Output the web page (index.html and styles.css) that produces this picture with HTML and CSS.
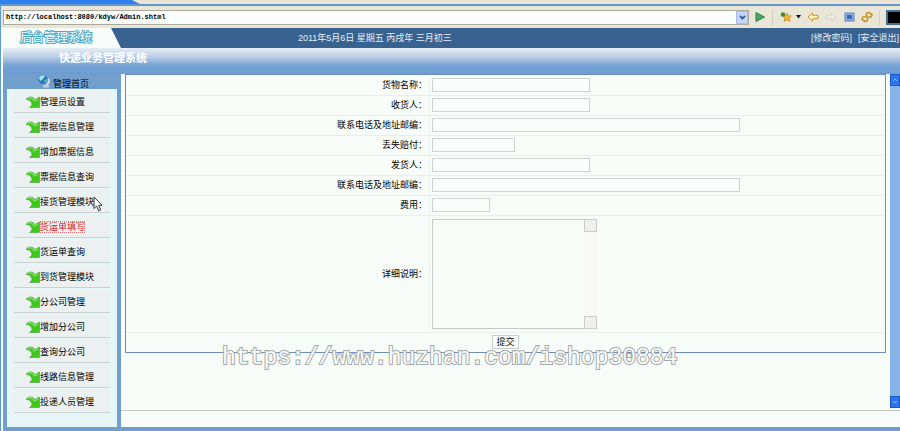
FILE: index.html
```
<!DOCTYPE html>
<html>
<head>
    <meta charset="UTF-8">
    <title>后台管理系统</title>
    <link rel="stylesheet" href="styles.css">
</head>
<body>
    <div class="tab-strip"><div class="active-tab"></div></div>
    <div class="toolbar">
        <div class="address">
            <input type="text" class="address-input" aria-label="Address" value="http://localhost:8080/kdyw/Admin.shtml">
            <button type="button" class="address-drop" aria-label="History">
                <svg width="7" height="5" viewBox="0 0 7 5"><path d="M1 1l2.5 2.5L6 1" fill="none" stroke="#35598f" stroke-width="1.8"/></svg>
            </button>
        </div>
        <button type="button" class="tool" aria-label="Go">
            <svg width="12" height="12" viewBox="0 0 12 12"><path d="M2 1.5L10.5 6 2 10.5z" fill="#4da866" stroke="#317c4b"/></svg>
        </button>
        <span class="tool-sep"></span>
        <button type="button" class="tool fav" aria-label="Favorites">
            <svg width="14" height="12" viewBox="0 0 14 12"><path d="M8 2l1.3 2.7 3 .2-2.2 2.1.8 3.3L8 8.700l-2.800 1.600.7-3.200L3.600 5l3.100-.3z" fill="#f5b62e" stroke="#d38a16" stroke-width=".8"/><circle cx="4" cy="3.5" r="2.3" fill="#3c8c3b"/></svg>
            <svg width="5" height="4" viewBox="0 0 5 4"><path d="M0 0h5L2.5 3.5z" fill="#111"/></svg>
        </button>
        <button type="button" class="tool" aria-label="Back">
            <svg width="12" height="12" viewBox="0 0 12 12"><path d="M1 6l4.500-4v2.300H11v3.400H5.500V10z" fill="#fff4c4" stroke="#c8952f"/></svg>
        </button>
        <button type="button" class="tool" aria-label="Forward">
            <svg width="12" height="12" viewBox="0 0 12 12"><path d="M11 6L6.500 2v2.300H1v3.400h5.500V10z" fill="#eeece0" stroke="#d5d3c7"/></svg>
        </button>
        <button type="button" class="tool" aria-label="Stop">
            <svg width="12" height="12" viewBox="0 0 12 12"><rect x="2" y="2" width="9" height="8" fill="#8fb0e2" stroke="#5f83bf"/><rect x="4" y="4" width="5" height="4" fill="#4168b4"/></svg>
        </button>
        <button type="button" class="tool" aria-label="Refresh">
            <svg width="12" height="12" viewBox="0 0 12 12"><path d="M5.500 6.500V2.500L8 1.500l3 2-1 2.500H7.500M6.500 5.500v4L4 10.500l-3-2L2 6h2.500" fill="none" stroke="#c8922e" stroke-width="1.600"/><path d="M7 3l2 .5M3 8l2 .5" fill="none" stroke="#ffe28a"/></svg>
        </button>
        <span class="tool-sep"></span>
        <span class="throbber"></span>
    </div>

    <div class="page">
        <header>
            <div class="top-bar">
                <div class="logo">后台管理系统</div>
                <div class="date">2011年5月6日 星期五 丙戌年 三月初三</div>
                <nav class="top-links">
                    <a href="#">[修改密码]</a>
                    <a href="#">[安全退出]</a>
                </nav>
            </div>
            <div class="banner">快递业务管理系统</div>
        </header>

        <div class="content">
            <aside class="sidebar">
                <a href="#" class="home">
                    <svg width="14" height="14" viewBox="0 0 14 14"><path d="M9 12c4-1.500 4.500-5 3-8l-1.500.8c1 2 .5 4.500-2 5.700z" fill="#dcdff5"/><ellipse cx="9" cy="12.300" rx="3.500" ry="1.300" fill="#c9cbe9"/><circle cx="6" cy="5.500" r="4.500" fill="#2b78c0"/><path d="M2 4c1-2.500 4-3.500 6-2.300C8.500 3 6.500 3 6 4.500S4 7 3 6.500z" fill="#a8e6ef"/><path d="M7 6l2.500-1 .5 2-2 2z" fill="#57bfa6"/></svg>
                    <span>管理首页</span>
                </a>
                <ul class="menu" id="menu"></ul>
            </aside>

            <main class="main">
                <div class="workspace">
                    <form class="form-wrap" onsubmit="return false">
                        <table class="form-table">
                            <tr>
                                <th><label for="goods">货物名称：</label></th>
                                <td><input type="text" id="goods" class="w-medium"></td>
                            </tr>
                            <tr>
                                <th><label for="receiver">收货人：</label></th>
                                <td><input type="text" id="receiver" class="w-medium"></td>
                            </tr>
                            <tr>
                                <th><label for="receiver-contact">联系电话及地址邮编：</label></th>
                                <td><input type="text" id="receiver-contact" class="w-long"></td>
                            </tr>
                            <tr>
                                <th><label for="compensation">丢失赔付：</label></th>
                                <td><input type="text" id="compensation" class="w-short"></td>
                            </tr>
                            <tr>
                                <th><label for="sender">发货人：</label></th>
                                <td><input type="text" id="sender" class="w-medium"></td>
                            </tr>
                            <tr>
                                <th><label for="sender-contact">联系电话及地址邮编：</label></th>
                                <td><input type="text" id="sender-contact" class="w-long"></td>
                            </tr>
                            <tr>
                                <th><label for="fee">费用：</label></th>
                                <td><input type="text" id="fee" class="w-tiny"></td>
                            </tr>
                            <tr class="detail-row">
                                <th><label for="detail">详细说明：</label></th>
                                <td>
                                    <div class="detail-box">
                                        <textarea id="detail"></textarea>
                                        <div class="detail-scroll"><span></span><span></span></div>
                                    </div>
                                </td>
                            </tr>
                            <tr>
                                <td colspan="2" class="submit-cell"><button type="submit" class="submit">提交</button></td>
                            </tr>
                        </table>
                    </form>
                    <div class="scrollbar">
                        <span><svg width="6" height="4" viewBox="0 0 6 4"><path d="M1 3l2-2 2 2" fill="none" stroke="#8fc0ff"/></svg></span>
                        <span><svg width="6" height="4" viewBox="0 0 6 4"><path d="M1 1l2 2 2-2" fill="none" stroke="#8fc0ff"/></svg></span>
                    </div>
                </div>
                <div class="status"></div>
            </main>
        </div>
    </div>

    <div class="watermark">https://www.huzhan.com/ishop30884</div>
    <svg class="pointer" width="10" height="16" viewBox="0 0 10 16"><path d="M1 1v11.500l2.700-2.500 2 4.800 2-.9-2-4.600H9z" fill="#fff" stroke="#333"/></svg>

<script>
    var items = ['管理员设置', '票据信息管理', '增加票据信息', '票据信息查询', '接货管理模块', '货运单填写', '货运单查询',
        '到货管理模块', '分公司管理', '增加分公司', '查询分公司', '线路信息管理', '投递人员管理'];
    var current = '货运单填写';
    var icon = '<svg width="14" height="12" viewBox="0 0 14 12"><path d="M0 3.500C2 .3 6.500 0 9 3.500L13.500 1v10.500H3.500L6 9C6 6 4 3.500 0 3.500z" fill="#3fc91d" stroke="#4a9a3c" stroke-width=".6"/><path d="M2 2.500c2-1.500 5-.5 6 2.500l4-2" fill="none" stroke="#a0ec85"/></svg>';

    document.getElementById('menu').innerHTML = items.map(function (name) {
        return '<li><a href="#"' + (name === current ? ' class="active"' : '') + '>' + icon + '<span>' + name + '</span></a></li>';
    }).join('');
</script>
</body>
</html>
```

FILE: styles.css
```
* {
    box-sizing: border-box;
}

body {
    display: flex;
    flex-direction: column;
    min-height: 100vh;
    margin: 0;
    font-family: "Liberation Sans", "Noto Sans CJK SC", sans-serif;
    font-size: 9px;
    line-height: 12px;
    color: #000;
    background-color: #f8fcf9;
}

a {
    color: inherit;
    text-decoration: none;
}

button {
    font: inherit;
    padding: 0;
    cursor: pointer;
}

svg {
    display: block;
    flex: none;
}

/* browser bars */
.tab-strip {
    height: 6px;
    background-color: #ece4d5;
    border-bottom: 2px solid #5f98cc;
}

.active-tab {
    width: 140px;
    height: 4px;
    background-color: #2f82ee;
    clip-path: polygon(0 0, 132px 0, 100% 100%, 0 100%);
}

.toolbar {
    display: flex;
    align-items: center;
    gap: 6px;
    height: 22px;
    padding-left: 2px;
    border-left: 1px solid #5f98cc;
    background-color: #e9e6d8;
    overflow: hidden;
}

.address {
    display: flex;
    flex: 1;
    height: 15px;
    margin-right: -1px;
    border: 1px solid #aaa99d;
    background-color: #fafdfb;
}

.address-input {
    flex: 1;
    min-width: 0;
    padding: 0 2px;
    border: none;
    outline: none;
    background: none;
    color: #000;
    font-family: "Liberation Mono", monospace;
    font-size: 7px;
    font-weight: bold;
}

.address-drop {
    display: flex;
    align-items: center;
    justify-content: center;
    width: 12px;
    border: 1px solid #a7bfe8;
    background-color: #c3d5f8;
}

.tool {
    display: flex;
    align-items: center;
    border: none;
    background: none;
}

.fav {
    gap: 3px;
}

.tool-sep {
    width: 1px;
    height: 15px;
    background-color: #d2cfc0;
}

.throbber {
    width: 14px;
    height: 15px;
    border: 2px solid #3d7188;
    border-right: none;
    background-color: #000;
}

/* page header */
.page {
    display: flex;
    flex: 1;
    flex-direction: column;
    border-left: 1px solid #5f98cc;
    padding-left: 2px;
}

.top-bar {
    display: flex;
    align-items: center;
    height: 20px;
    padding-right: 1px;
    background-color: #38628f;
    color: #e6f0fa;
}

.logo {
    width: 118px;
    padding-left: 17px;
    line-height: 20px;
    font-size: 12px;
    color: #f8fdfd;
    -webkit-text-stroke: 2px #4eabc8;
    paint-order: stroke fill;
    background-color: #f8fcf9;
    clip-path: polygon(0 0, 108px 0, 100% 100%, 0 100%);
}

.date {
    flex: 1;
    padding-left: 177px;
    white-space: nowrap;
}

.top-links {
    display: flex;
    gap: 6px;
    white-space: nowrap;
}

.banner {
    height: 26px;
    padding-left: 56px;
    font-size: 11px;
    font-weight: bold;
    line-height: 20px;
    color: #fff;
    background: linear-gradient(#e6edf5, #b9cde5 35%, #78a4d6 65%, #6b9cd2);
}

/* sidebar */
.content {
    display: flex;
    flex: 1;
    border-bottom: 4px solid #709fce;
}

.sidebar {
    display: flex;
    flex-direction: column;
    width: 118px;
    border: solid #709fce;
    border-width: 0 4px;
    background-color: #e6f6f7;
}

.home {
    display: flex;
    gap: 2px;
    height: 15px;
    padding-left: 30px;
    background-color: #709fce;
}

.home span {
    padding-top: 4px;
}

.menu {
    margin: 0;
    padding: 1px 7px 0;
    list-style: none;
}

.menu li {
    height: 23px;
    margin-bottom: 2px;
    border-bottom: 1px solid #cbd1d1;
    background-color: #ebf1f1;
}

.menu a {
    display: flex;
    align-items: center;
    height: 23px;
    padding-left: 12px;
    white-space: nowrap;
}

.menu a.active {
    color: #e0141c;
}

.menu a.active span {
    outline: 1px dotted #d77;
    outline-offset: -1px;
}

/* form */
.main {
    display: flex;
    flex: 1;
    flex-direction: column;
    min-width: 0;
}

.workspace {
    display: flex;
    flex: 1;
    align-items: flex-start;
    gap: 4px;
    padding-left: 4px;
    border-bottom: 1px solid #bfc3c2;
}

.form-wrap {
    flex: 1;
    border: 1px solid #6d8cb8;
}

.form-table {
    width: 100%;
    border-collapse: collapse;
}

.form-table th,
.form-table td {
    height: 20px;
    padding: 0;
    border-bottom: 1px solid #e8eeeb;
}

.form-table tr:last-child td {
    border-bottom: none;
}

.form-table th {
    width: 40%;
    padding-right: 2px;
    border-right: 1px solid #eef2f0;
    font-weight: normal;
    text-align: right;
}

.form-table td {
    padding-left: 2px;
}

.form-table input {
    display: block;
    height: 14px;
    padding: 0 2px;
    border: 1px solid #ccd3d0;
    background-color: #fafdfb;
    font: inherit;
}

.w-tiny {
    width: 58px;
}

.w-short {
    width: 83px;
}

.w-medium {
    width: 158px;
}

.w-long {
    width: 308px;
}

.form-table .detail-row th,
.form-table .detail-row td {
    height: 117px;
}

.detail-box {
    display: flex;
    width: 165px;
    height: 110px;
}

.detail-box textarea {
    flex: 1;
    min-width: 0;
    padding: 2px;
    border: 1px solid #c6cac8;
    border-right: none;
    background: none;
    font: inherit;
    resize: none;
}

.detail-scroll {
    display: flex;
    flex-direction: column;
    justify-content: space-between;
    background-color: #f8f8f6;
}

.detail-scroll span {
    width: 13px;
    height: 13px;
    border: 1px solid #ccc;
    background-color: #f0efee;
}

.form-table .submit-cell {
    padding: 0;
    text-align: center;
}

.submit {
    display: block;
    width: 27px;
    height: 14px;
    margin: 0 auto;
    border: 1px solid #c9cecb;
    background-color: #fafdfb;
    color: #111;
    line-height: 12px;
}

.scrollbar {
    display: flex;
    flex-direction: column;
    justify-content: space-between;
    align-self: stretch;
    width: 10px;
    margin-bottom: 2px;
    background-color: #86b4e8;
}

.scrollbar span {
    display: flex;
    align-items: center;
    justify-content: center;
    height: 12px;
    border: 1px solid #1b58d0;
    background-color: #2c74ee;
}

.status {
    height: 16px;
}

/* overlays */
.watermark {
    position: absolute;
    top: 348px;
    left: 222px;
    font-family: "Liberation Mono", monospace;
    font-size: 23px;
    line-height: 20px;
    color: #f8fcf9;
    -webkit-text-stroke: 2px #a3a8aa;
    paint-order: stroke fill;
    pointer-events: none;
}

.pointer {
    position: absolute;
    top: 196px;
    left: 93px;
    pointer-events: none;
}
```
